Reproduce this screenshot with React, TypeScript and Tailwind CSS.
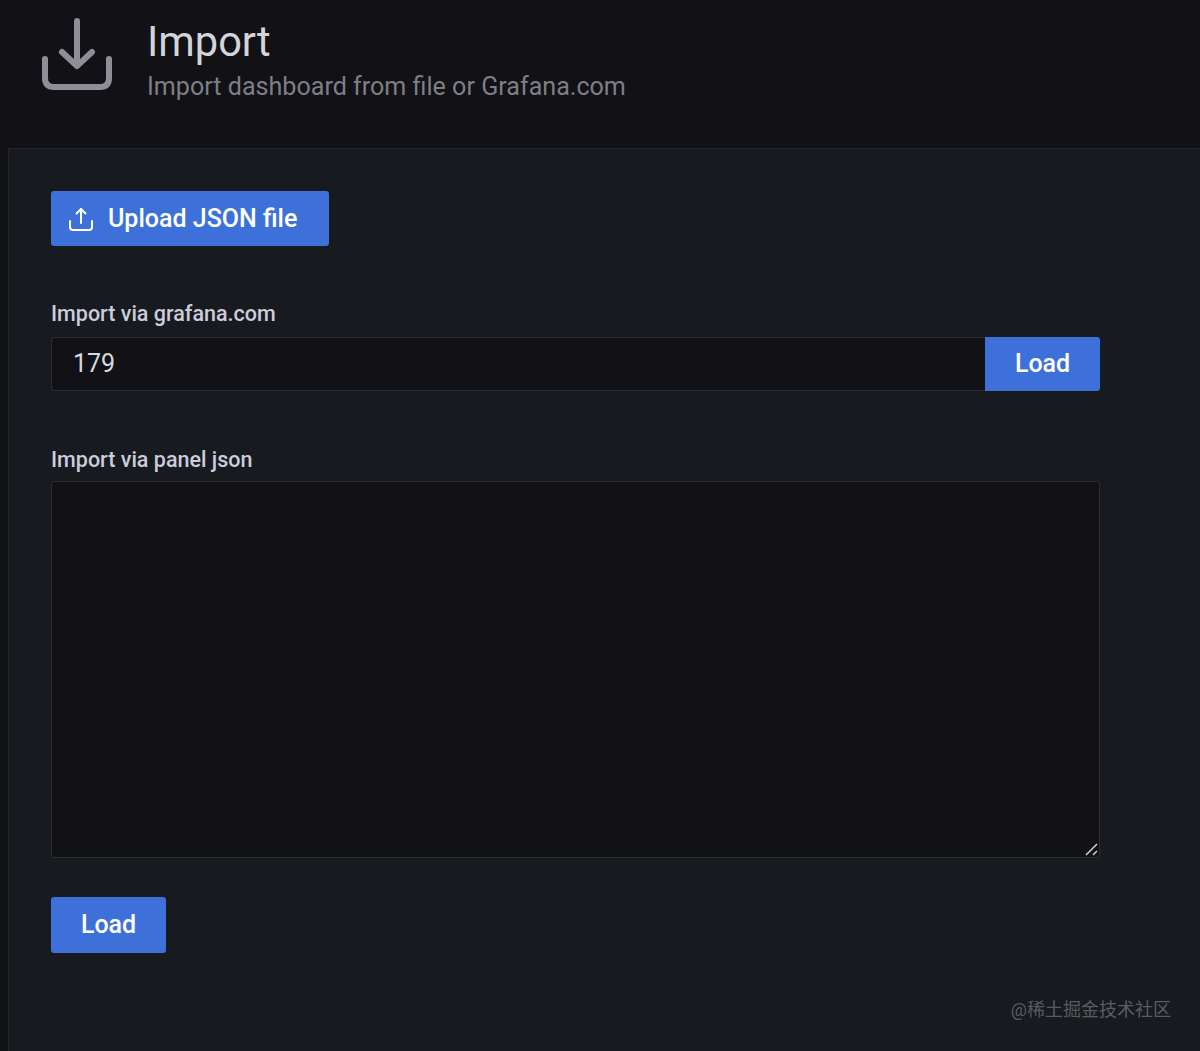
const font = "font-['Roboto','Noto_Sans_CJK_SC',sans-serif]";

function HeaderIcon() {
  return (
    <svg width="74" height="74" viewBox="0 0 74 74" fill="none" stroke="#8e8e96" strokeWidth="6" strokeLinecap="round" strokeLinejoin="round">
      <path d="M37 5V49" />
      <path d="M22 36L37 50L52 36" />
      <path d="M5 43V62C5 68 8 71 14 71H60C66 71 69 68 69 62V43" />
    </svg>
  );
}

function UploadIcon() {
  return (
    <svg width="26" height="26" viewBox="0 0 26 26" fill="none" stroke="#ffffff" strokeWidth="2" strokeLinecap="round" strokeLinejoin="round">
      <path d="M13 3V17" />
      <path d="M8.5 7.5L13 3L17.5 7.5" />
      <path d="M2 15V21C2 23 3 24 5 24H21C23 24 24 23 24 21V15" />
    </svg>
  );
}

function Grip() {
  return (
    <svg className="absolute right-[1px] bottom-[1px]" width="13" height="13" viewBox="0 0 13 13" fill="none" stroke="#d8d8d8" strokeWidth="1.4">
      <path d="M1 12L12 1" />
      <path d="M8 12L12 8" />
    </svg>
  );
}

export default function App() {
  return (
    <div className={`${font} relative h-[1051px] w-[1200px] overflow-hidden bg-[#111116] pl-2`}>
      <header className="flex h-[148px] -ml-2 pl-[40px] pt-[16px]">
        <HeaderIcon />
        <div className="ml-[33px] pt-[1px]">
          <h1 className="text-[41.6px] leading-[50px] font-normal text-[#d4d5da]">Import</h1>
          <p className="mt-[5px] text-[25.1px] leading-[30px] text-[#7e7f85]">Import dashboard from file or Grafana.com</p>
        </div>
      </header>

      <main className="h-[903px] border-t border-l border-[#23272c] bg-[#171a1e] pl-[42px] pt-[42px]">
        <button className="flex h-[55px] w-[278px] items-center gap-[14px] rounded-[3px] bg-[#3d71d9] pl-[17px] text-[25px] font-medium text-white">
          <UploadIcon />
          Upload JSON file
        </button>

        <section className="mt-[54px] w-[1049px]">
          <label className="block text-[21.5px] leading-[28px] font-medium text-[#ccccdc]">Import via grafana.com</label>
          <div className="mt-[9px] flex h-[54px]">
            <div className="flex flex-1 items-center rounded-l-[3px] border border-r-0 border-[#2b2e33] bg-[#121216] pl-[21px] text-[25px] text-[#d8d9de]">179</div>
            <button className="w-[115px] rounded-r-[3px] bg-[#3d71d9] text-[25px] font-medium text-white">Load</button>
          </div>
        </section>

        <section className="mt-[55px] w-[1049px]">
          <label className="block text-[21.5px] leading-[28px] font-medium text-[#ccccdc]">Import via panel json</label>
          <div className="relative mt-[7px] h-[377px] rounded-[3px] border border-[#2b2e33] bg-[#121216]">
            <Grip />
          </div>
        </section>

        <button className="mt-[39px] h-[56px] w-[115px] rounded-[3px] bg-[#3d71d9] text-[25px] font-medium text-white">Load</button>
      </main>

      <div className="absolute right-[29px] bottom-[29px] text-[18px] leading-[24px] text-[#5a5d60]">@稀土掘金技术社区</div>
    </div>
  );
}
